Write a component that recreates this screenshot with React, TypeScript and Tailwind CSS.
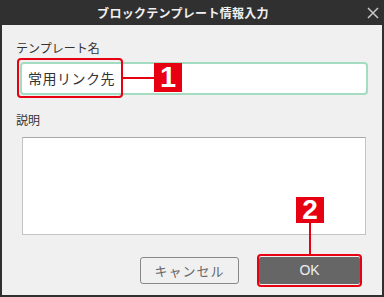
import React from "react";

export default function App() {
  const font = { fontFamily: '"Noto Sans CJK JP", "Noto Sans", sans-serif' };
  return (
    <div className="relative w-[384px] h-[297px] flex flex-col bg-[#303030] overflow-hidden" style={font}>
      <div className="h-[25px] flex items-center justify-center relative shrink-0">
        <span className="text-[12px] font-bold text-[#f0f0f0] leading-none tracking-[0.3px] pr-[18px]">ブロックテンプレート情報入力</span>
        <svg className="absolute right-[5px] top-[7px]" width="12" height="12" viewBox="0 0 12 12">
          <path d="M1 1 L11 11 M11 1 L1 11" stroke="#c8c8c8" strokeWidth="1.5" />
        </svg>
      </div>
      <div className="flex-1 mx-[2px] mb-[2px] bg-[#f0f0f0] flex flex-col pl-[14px]">
        <div className="mt-[15px] h-[16px] text-[12px] leading-[16px] text-[#333]">テンプレート名</div>
        <div className="mt-[6px] ml-[4px] w-[348px] h-[33px] bg-white border-[2px] border-[#a3dcc1] rounded-[4px] flex items-center pl-[6px]">
          <span className="text-[14px] text-[#333] tracking-[0.5px]">常用リンク先</span>
        </div>
        <div className="mt-[17px] h-[16px] text-[12px] leading-[16px] text-[#333]">説明</div>
        <div className="mt-[9px] ml-[6px] w-[344px] h-[98px] bg-white border border-[#c4c4c4] border-t-[#a8a8a8]"></div>
        <div className="mt-[22px] flex gap-[20px] ml-[124px]">
          <div className="w-[99px] h-[27px] border border-[#888] rounded-[3px] flex items-center justify-center text-[13px] text-[#666] tracking-[1px]">キャンセル</div>
          <div className="w-[101px] h-[27px] bg-[#666] rounded-[2px] flex items-center justify-center text-[14px] text-[#eee]" style={{ fontFamily: '"Liberation Sans", sans-serif' }}>OK</div>
        </div>
      </div>

      {/* annotation 1 */}
      <div className="absolute left-[17px] top-[58px] w-[106px] h-[40px] border-[2px] border-[#e60012] rounded-[4px]"></div>
      <div className="absolute left-[123px] top-[77px] w-[31px] h-[2px] bg-[#e60012]"></div>
      <div className="absolute left-[154px] top-[63px] w-[28px] h-[29px] bg-[#e60012] flex items-center justify-center text-white text-[29px] font-bold leading-none" style={{ fontFamily: '"Liberation Sans", sans-serif' }}>1</div>

      {/* annotation 2 */}
      <div className="absolute left-[296px] top-[197px] w-[28px] h-[26px] bg-[#e60012] flex items-center justify-center text-white text-[28px] font-bold leading-none" style={{ fontFamily: '"Liberation Sans", sans-serif' }}>2</div>
      <div className="absolute left-[309px] top-[223px] w-[2px] h-[31px] bg-[#e60012]"></div>
      <div className="absolute left-[257px] top-[254px] w-[105px] h-[33px] border-[2px] border-[#e60012] rounded-[4px]"></div>
    </div>
  );
}
